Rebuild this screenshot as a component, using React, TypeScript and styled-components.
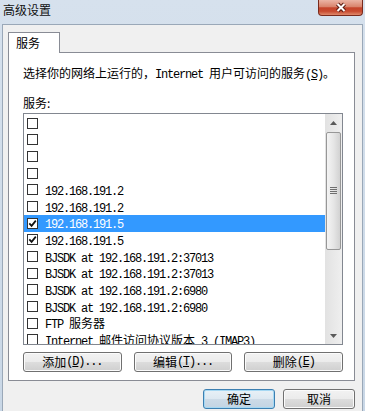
import React from "react";
import styled, { createGlobalStyle } from "styled-components";

const GlobalStyle = createGlobalStyle`
  html, body {
    margin: 0;
    padding: 0;
    background: #cfdcea;
  }
  body {
    font-family: "Noto Sans CJK SC", "Liberation Sans", sans-serif;
    font-size: 12px;
    color: #000;
  }
`;

const Window = styled.div`
  width: 365px;
  height: 411px;
  overflow: hidden;
  display: flex;
  flex-direction: column;
  background: linear-gradient(#d6e1ed, #c9d7e6);
`;

const TitleBar = styled.div`
  height: 24px;
  flex-shrink: 0;
  display: flex;
  justify-content: space-between;
  align-items: flex-start;
  padding: 0 2px 0 3px;
  box-sizing: border-box;
`;

const Title = styled.div`
  margin-top: 3px;
  line-height: 14px;
  font-size: 12px;
  color: #111;
`;

const CloseButton = styled.div`
  width: 45px;
  height: 16px;
  box-sizing: border-box;
  border: 1px solid #7a2a1c;
  border-top: none;
  border-radius: 0 0 4px 4px;
  background: linear-gradient(
    #ebb4a5 0%,
    #d9846d 45%,
    #c5442b 52%,
    #c84b30 75%,
    #e08a6c 100%
  );
  display: flex;
  align-items: center;
  justify-content: center;
`;

const Body = styled.div`
  flex: 1;
  margin: 0 2px;
  border: 1px solid #9aa8b8;
  border-bottom: none;
  background: #f0f0f0;
  padding: 7px 7px 0 5px;
  display: flex;
  flex-direction: column;
`;

const TabStrip = styled.div`
  display: flex;
`;

const Tab = styled.div`
  width: 52px;
  height: 21px;
  box-sizing: border-box;
  border: 1px solid #898c95;
  border-bottom: none;
  background: #fff;
  padding-left: 7px;
  line-height: 19px;
  margin-bottom: -1px;
  position: relative;
  z-index: 1;
`;

const Panel = styled.div`
  border: 1px solid #898c95;
  background: #fff;
  padding: 12px 11px 8px 14px;
  display: flex;
  flex-direction: column;
`;

const Desc = styled.div`
  line-height: 16px;
  white-space: nowrap;
`;

const Label = styled.div`
  margin-top: 12px;
  line-height: 16px;
`;

const ListBox = styled.div`
  margin-top: 2px;
  height: 232px;
  box-sizing: border-box;
  border: 1px solid #828790;
  background: #fff;
  display: flex;
`;

const Rows = styled.div`
  flex: 1;
  padding-top: 1px;
  overflow: hidden;
  display: flex;
  flex-direction: column;
`;

const Row = styled.div<{ $selected?: boolean }>`
  height: 16.67px;
  flex-shrink: 0;
  display: flex;
  align-items: center;
  gap: 7px;
  padding-left: 3px;
  white-space: nowrap;
  background: ${(p) => (p.$selected ? "#3399ff" : "transparent")};
  color: ${(p) => (p.$selected ? "#fff" : "#000")};
`;

const Box = styled.div`
  width: 11px;
  height: 11px;
  box-sizing: border-box;
  border: 1px solid #333;
  background: #fff;
  flex-shrink: 0;
  display: flex;
  align-items: center;
  justify-content: center;
`;

const Latin = styled.span`
  font-family: "Liberation Mono", monospace;
  font-size: 12px;
  letter-spacing: -1.2px;
`;

const Cjk = styled.span`
  font-family: "Noto Sans CJK SC", sans-serif;
  font-size: 12px;
  letter-spacing: 0;
`;

const Scrollbar = styled.div`
  width: 17px;
  flex-shrink: 0;
  display: flex;
  flex-direction: column;
  background: linear-gradient(90deg, #e2e2e2, #efefef);
`;

const Arrow = styled.div`
  height: 17px;
  flex-shrink: 0;
  display: flex;
  align-items: center;
  justify-content: center;
`;

const Thumb = styled.div`
  height: 118px;
  margin: 1px 1px 0;
  box-sizing: border-box;
  border: 1px solid #979797;
  border-radius: 2px;
  background: linear-gradient(90deg, #f4f4f4, #e6e6e6 50%, #d2d2d2);
  display: flex;
  align-items: center;
  justify-content: center;
`;

const Track = styled.div`
  flex: 1;
`;

const ButtonRow = styled.div`
  margin-top: 7px;
  display: grid;
  grid-template-columns: repeat(3, 1fr);
  gap: 12px;
`;

const PushButton = styled.div<{ $default?: boolean; $width?: number }>`
  height: 20px;
  width: ${(p) => (p.$width ? `${p.$width}px` : "auto")};
  box-sizing: border-box;
  border: 1px solid ${(p) => (p.$default ? "#3c7fb1" : "#707070")};
  border-radius: 3px;
  background: ${(p) =>
    p.$default
      ? "linear-gradient(#e8f1f7, #dde8f1 50%, #cddbe7 50%, #c3d4e3)"
      : "linear-gradient(#f2f2f2, #ebebeb 50%, #dddddd 50%, #cfcfcf)"};
  box-shadow: inset 0 0 0 1px ${(p) => (p.$default ? "#a6d8f3" : "#fbfbfb")};
  display: flex;
  align-items: center;
  justify-content: center;
  line-height: 18px;
  white-space: nowrap;
`;

const Footer = styled.div`
  margin-top: 8px;
  display: flex;
  justify-content: flex-end;
  gap: 8px;
`;

const CJK_RE = /([\u3000-\u303f\u4e00-\u9fff\uff00-\uffef]+)/;

const Mixed: React.FC<{ text: string }> = ({ text }) => (
  <>
    {text
      .split(CJK_RE)
      .filter((part) => part !== "")
      .map((part, i) =>
        CJK_RE.test(part) ? (
          <Cjk key={i}>{part}</Cjk>
        ) : (
          <Latin key={i}>{part}</Latin>
        )
      )}
  </>
);

const Check = () => (
  <svg width="9" height="9" viewBox="0 0 9 9">
    <path
      d="M1.3 4.4 L3.6 6.9 L7.8 1.6"
      fill="none"
      stroke="#111"
      strokeWidth="1.7"
    />
  </svg>
);

const CloseX = () => (
  <svg width="14" height="11" viewBox="0 0 14 11">
    <path d="M3.5 2 L10.5 9 M10.5 2 L3.5 9" stroke="#5a1a10" strokeWidth="4" />
    <path d="M3.5 2 L10.5 9 M10.5 2 L3.5 9" stroke="#fff" strokeWidth="2" />
  </svg>
);

const ArrowGlyph: React.FC<{ down?: boolean }> = ({ down }) => (
  <svg width="7" height="4" viewBox="0 0 7 4">
    <polygon
      points={down ? "0,0 7,0 3.5,4" : "0,4 7,4 3.5,0"}
      fill="#5a5a5a"
    />
  </svg>
);

const Grip = () => (
  <svg width="7" height="8" viewBox="0 0 7 8">
    {[0, 2, 4, 6].map((y) => (
      <line key={y} x1="0" y1={y + 0.5} x2="7" y2={y + 0.5} stroke="#6f6f6f" />
    ))}
  </svg>
);

type Service = { label: string; checked?: boolean; selected?: boolean };

const services: Service[] = [
  { label: "" },
  { label: "" },
  { label: "" },
  { label: "" },
  { label: "192.168.191.2" },
  { label: "192.168.191.2" },
  { label: "192.168.191.5", checked: true, selected: true },
  { label: "192.168.191.5", checked: true },
  { label: "BJSDK at 192.168.191.2:37013" },
  { label: "BJSDK at 192.168.191.2:37013" },
  { label: "BJSDK at 192.168.191.2:6980" },
  { label: "BJSDK at 192.168.191.2:6980" },
  { label: "FTP 服务器" },
  { label: "Internet 邮件访问协议版本 3 (IMAP3)" },
];

const App: React.FC = () => {
  return (
    <Window>
      <GlobalStyle />
      <TitleBar>
        <Title>高级设置</Title>
        <CloseButton>
          <CloseX />
        </CloseButton>
      </TitleBar>
      <Body>
        <TabStrip>
          <Tab>服务</Tab>
        </TabStrip>
        <Panel>
          <Desc>
            <Mixed text="选择你的网络上运行的，Internet 用户可访问的服务" />
            <Latin>
              (<u>S</u>)
            </Latin>
            <Cjk>。</Cjk>
          </Desc>
          <Label>服务:</Label>
          <ListBox>
            <Rows>
              {services.map((s, i) => (
                <Row key={i} $selected={s.selected}>
                  <Box>{s.checked && <Check />}</Box>
                  <span>
                    <Mixed text={s.label} />
                  </span>
                </Row>
              ))}
            </Rows>
            <Scrollbar>
              <Arrow>
                <ArrowGlyph />
              </Arrow>
              <Thumb>
                <Grip />
              </Thumb>
              <Track />
              <Arrow>
                <ArrowGlyph down />
              </Arrow>
            </Scrollbar>
          </ListBox>
          <ButtonRow>
            <PushButton>
              <Cjk>添加</Cjk>
              <Latin>
                (<u>D</u>)...
              </Latin>
            </PushButton>
            <PushButton>
              <Cjk>编辑</Cjk>
              <Latin>
                (<u>T</u>)...
              </Latin>
            </PushButton>
            <PushButton>
              <Cjk>删除</Cjk>
              <Latin>
                (<u>E</u>)
              </Latin>
            </PushButton>
          </ButtonRow>
        </Panel>
        <Footer>
          <PushButton $default $width={72}>
            确定
          </PushButton>
          <PushButton $width={72}>取消</PushButton>
        </Footer>
      </Body>
    </Window>
  );
};

export default App;
